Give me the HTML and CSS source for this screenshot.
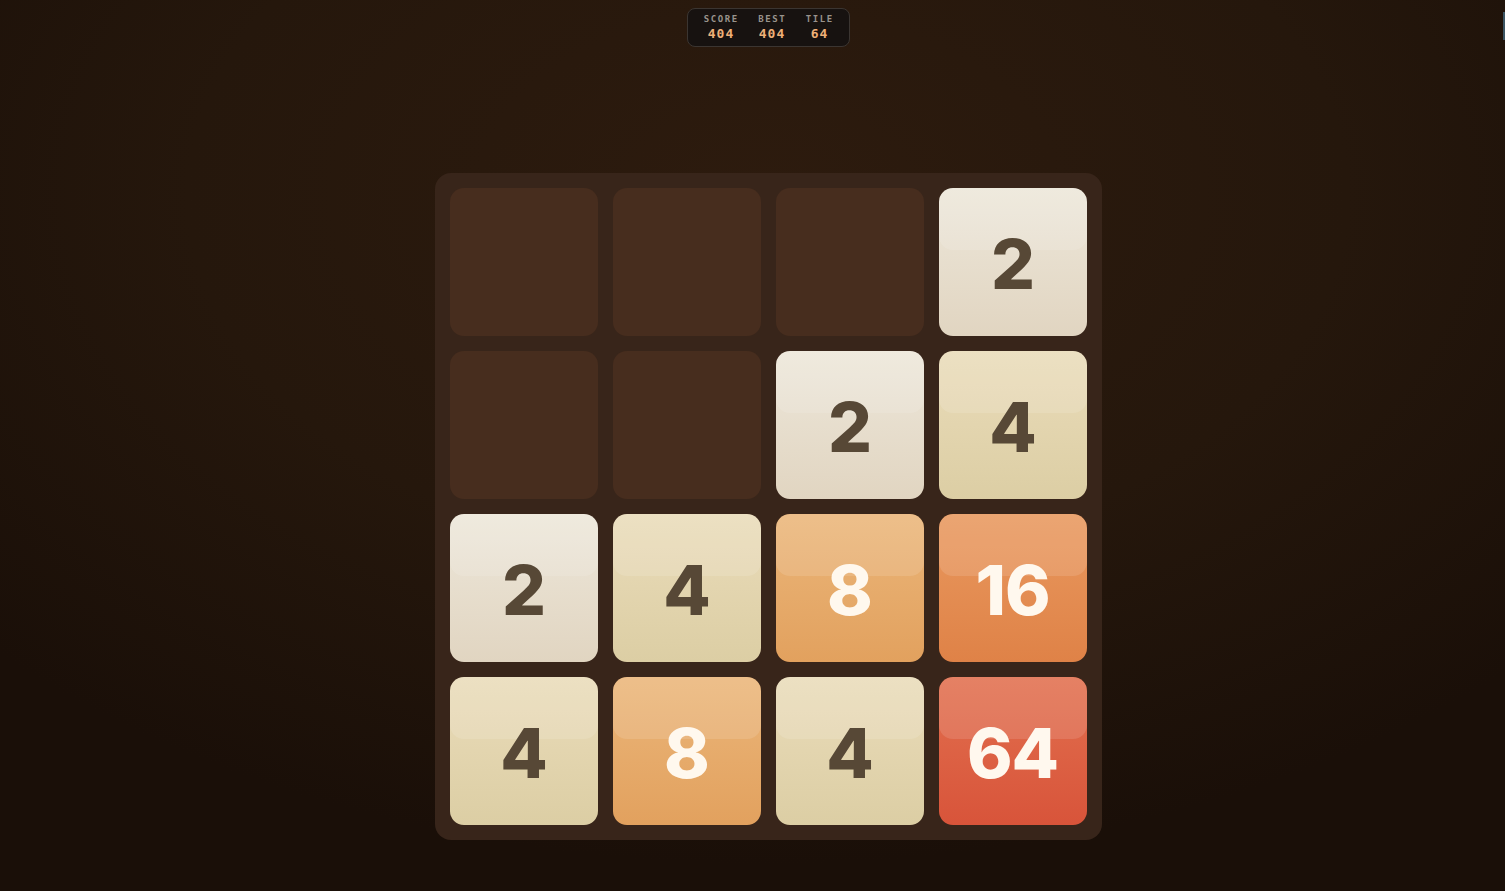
FILE: index.html
```html
<!DOCTYPE html>
<html lang="en">
<head>
<meta charset="utf-8">
<title>2048</title>
<link rel="stylesheet" href="styles.css">
</head>
<body>
<div class="page">
  <div class="hud">
    <div class="stat"><span class="stat-label">SCORE</span><span class="stat-value">404</span></div>
    <div class="stat"><span class="stat-label">BEST</span><span class="stat-value">404</span></div>
    <div class="stat"><span class="stat-label">TILE</span><span class="stat-value">64</span></div>
  </div>
  <div class="board">
    <div class="cell"></div>
    <div class="cell"></div>
    <div class="cell"></div>
    <div class="cell tile t2"><span>2</span></div>

    <div class="cell"></div>
    <div class="cell"></div>
    <div class="cell tile t2"><span>2</span></div>
    <div class="cell tile t4"><span>4</span></div>

    <div class="cell tile t2"><span>2</span></div>
    <div class="cell tile t4"><span>4</span></div>
    <div class="cell tile t8"><span>8</span></div>
    <div class="cell tile t16"><span>16</span></div>

    <div class="cell tile t4"><span>4</span></div>
    <div class="cell tile t8"><span>8</span></div>
    <div class="cell tile t4"><span>4</span></div>
    <div class="cell tile t64"><span>64</span></div>
  </div>
</div>
<div class="edge-marker"></div>
</body>
</html>
```
FILE: styles.css
```css
html, body {
  margin: 0;
  height: 100%;
}

body {
  background: radial-gradient(ellipse 70% 75% at 51% 22%, #2d1b0e 0%, #25170c 55%, #1a0f08 100%);
  font-family: Inter, "Liberation Sans", sans-serif;
  overflow: hidden;
}

.page {
  display: flex;
  flex-direction: column;
  align-items: center;
  padding-top: 8px;
  padding-left: 31px;
}

/* score strip */
.hud {
  display: flex;
  justify-content: center;
  gap: 21px;
  height: 39px;
  width: 163px;
  box-sizing: border-box;
  padding-top: 3px;
  background: #171210;
  border: 1px solid #3b3531;
  border-radius: 8px;
}

.stat {
  display: flex;
  flex-direction: column;
  align-items: center;
  font-family: "DejaVu Sans Mono", "Liberation Mono", monospace;
  font-weight: bold;
}

.stat-label {
  font-size: 9px;
  letter-spacing: 1.6px;
  margin-right: -1.6px;
  color: #99938c;
  line-height: 13px;
  margin-top: 1px;
}

.stat-value {
  font-size: 13px;
  letter-spacing: 1px;
  margin-right: -1px;
  color: #efb077;
  line-height: 16px;
}

/* board */
.board {
  margin-top: 126px;
  display: grid;
  grid-template-columns: repeat(4, 148px);
  grid-auto-rows: 148px;
  gap: 15px;
  padding: 15px;
  background: #38251a;
  border-radius: 16px;
}

.cell {
  position: relative;
  border-radius: 14px;
  background: #472d1e;
  overflow: hidden;
}

.tile {
  display: flex;
  align-items: center;
  justify-content: center;
  font-weight: 800;
  font-size: 69px;
  letter-spacing: -1px;
  color: #574836;
}

/* glossy band across the upper part of each tile */
.tile::before {
  content: "";
  position: absolute;
  left: 0;
  right: 0;
  top: 0;
  height: 62px;
  border-radius: 14px;
  background: rgba(255, 255, 255, 0.12);
}

.tile span {
  position: relative;
  margin-top: 4px;
}

.t2  { background: linear-gradient(#ede7da, #e1d5c1); }
.t4  { background: linear-gradient(#eadcba, #dccea4); }
.t8  { background: linear-gradient(#ebb67a, #e2a15e); color: #fff8ee; }
.t16 { background: linear-gradient(#e9995f, #df8247); color: #fff8ee; }
.t64 { background: linear-gradient(#e2704f, #d8543a); color: #fff8ee; }

/* thin slate marker hugging the right window edge */
.edge-marker {
  position: fixed;
  right: 0;
  top: 12px;
  width: 2px;
  height: 28px;
  background: #3c5563;
}
```
